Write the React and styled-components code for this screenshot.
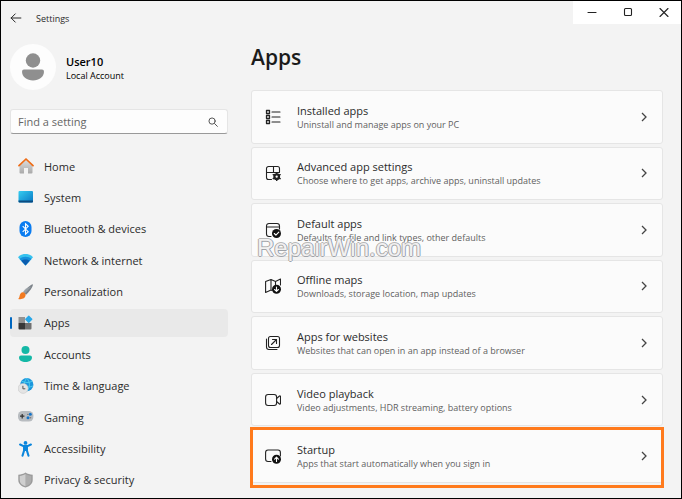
import React from 'react'
import styled, { createGlobalStyle } from 'styled-components'

const GlobalStyle = createGlobalStyle`
    * {
        box-sizing: border-box;
    }
    body {
        margin: 0;
        background: #f3f3f3;
        color: #2b2b2b;
        font-family: "Open Sans", "Noto Sans", sans-serif;
        font-size: 11px;
    }
    button, input {
        font-family: inherit;
        color: inherit;
    }
`
const Window = styled.div`
    min-height: 100vh;
    border: 1px solid black;
    background: #f3f3f3;
    display: flex;
    flex-direction: column;
`
const TitleBar = styled.header`
    display: flex;
    justify-content: space-between;
    align-items: flex-start;
    height: 42px;
`
const TitleLeft = styled.div`
    display: flex;
    align-items: center;
    gap: 14px;
    height: 34px;
    padding-left: 9px;
`
const BackButton = styled.button`
    display: flex;
    padding: 0;
    border: none;
    background: none;
`
const WindowTitle = styled.span`
    font-size: 9px;
`
const Controls = styled.div`
    display: flex;
    background: white;
`
const ControlButton = styled.button`
    display: flex;
    align-items: center;
    justify-content: center;
    width: 36px;
    height: 23px;
    padding: 0 0 2px 2px;
    border: none;
    background: none;
`
const Body = styled.div`
    flex: 1;
    display: flex;
    gap: 23px;
    padding: 0 18px 0 9px;
`
const Sidebar = styled.aside`
    width: 218px;
    flex-shrink: 0;
    display: flex;
    flex-direction: column;
    padding-bottom: 4px;
`
const User = styled.div`
    display: flex;
    align-items: center;
    gap: 10px;
    height: 48px;
`
const UserText = styled.div`
    padding-top: 3px;
    line-height: 14px;
    color: black;
`
const UserName = styled.div`
    font-weight: 600;
`
const UserType = styled.div`
    font-size: 9px;
`
const Search = styled.label`
    display: flex;
    align-items: center;
    height: 25px;
    margin: 18px 0;
    padding: 0 9px 0 7px;
    background: #fdfdfd;
    border: 1px solid #e5e5e5;
    border-bottom-color: #999;
    border-radius: 3px;
`
const SearchInput = styled.input`
    flex: 1;
    min-width: 0;
    padding: 0;
    border: none;
    outline: none;
    background: none;
    font-size: 11px;
    &::placeholder {
        color: #666;
        opacity: 1;
    }
`
const Nav = styled.nav`
    flex: 1;
    display: flex;
    flex-direction: column;
    justify-content: space-between;
`
const NavLink = styled.a`
    display: flex;
    align-items: center;
    gap: 10px;
    height: 28px;
    padding-left: 8px;
    border-radius: 4px;
    position: relative;
    color: #2b2b2b;
    text-decoration: none;
    background: ${props => props.$active ? '#e9e9e9' : 'none'};
    &::before {
        content: "";
        display: ${props => props.$active ? 'block' : 'none'};
        position: absolute;
        left: 0;
        top: 8px;
        width: 2px;
        height: 12px;
        border-radius: 1px;
        background: #0067c0;
    }
`
const Main = styled.main`
    flex: 1;
    min-width: 0;
    display: flex;
    flex-direction: column;
    padding-bottom: 15px;
    position: relative;
`
const PageTitle = styled.h1`
    margin: 0 0 19px;
    font-size: 21px;
    font-weight: 600;
    line-height: 28px;
    color: #1b1b1b;
`
const Cards = styled.div`
    flex: 1;
    display: grid;
    grid-auto-rows: 1fr;
    gap: 3px;
`
const Card = styled.button`
    display: flex;
    align-items: center;
    gap: 16px;
    padding: 0 13px;
    border: 1px solid #e5e5e5;
    border-radius: 3px;
    background: #fbfbfb;
    text-align: left;
    position: relative;
    &::after {
        content: "";
        display: ${props => props.$highlight ? 'block' : 'none'};
        position: absolute;
        inset: -3px -2px -6px;
        border: 3px solid #ff7a1c;
    }
`
const CardText = styled.span`
    flex: 1;
    display: flex;
    flex-direction: column;
    padding-top: 2px;
    line-height: 14px;
`
const CardTitle = styled.span`
    font-size: 11px;
`
const CardNote = styled.span`
    font-size: 9px;
    color: #5f5f5f;
`
const Watermark = styled.span`
    position: absolute;
    left: 6px;
    top: 191px;
    font-family: "Liberation Sans", Arial, sans-serif;
    font-size: 24px;
    line-height: 28px;
    color: #f1f1f1;
    text-shadow: -1px 0 #b5a99d, 1px 0 #93a4bb, 0 1px #a0a3a8, 0 -1px #b8b8b8;
    pointer-events: none;
`

const Icon = ({ size = 16, children }) => (
    <svg width={size} height={size} viewBox="0 0 16 16" fill="none" stroke="#222" strokeWidth="1.100" strokeLinecap="round" strokeLinejoin="round" aria-hidden="true">
        {children}
    </svg>
)

const Art = ({ children }) => (
    <svg width="16" height="16" viewBox="0 0 16 16" aria-hidden="true">{children}</svg>
)

const Avatar = () => (
    <svg width="46" height="46" viewBox="0 0 46 46" aria-hidden="true">
        <circle cx="23" cy="23" r="23" fill="#fdfdfd"/>
        <circle cx="23" cy="16.500" r="7.200" fill="#8f8f8f"/>
        <path d="M14 25.500h18a2 2 0 0 1 2 2c0 5.500-5 9-11 9s-11-3.500-11-9a2 2 0 0 1 2-2z" fill="#8f8f8f"/>
    </svg>
)

const Chevron = () => (
    <svg width="10" height="10" viewBox="0 0 10 10" fill="none" stroke="#444" strokeWidth="1.300" aria-hidden="true">
        <path d="M3 1l4 4-4 4"/>
    </svg>
)

const navItems = [
    { label: 'Home', icon: (
        <Art>
            <defs>
                <linearGradient id="wall" x1="0" y1="0" x2="0" y2="1"><stop stopColor="#dedede"/><stop offset="1" stopColor="#a9a9a9"/></linearGradient>
            </defs>
            <path d="M8 1.500L14.500 7.500V14.500a1 1 0 0 1-1 1H10v-5.500H6V15.500H2.500a1 1 0 0 1-1-1V7.500z" fill="url(#wall)"/>
            <path d="M1 7.700L8 1l7 6.700" fill="none" stroke="#ee6c16" strokeWidth="1.700" strokeLinecap="round" strokeLinejoin="round"/>
        </Art>
    ) },
    { label: 'System', icon: (
        <Art>
            <defs>
                <linearGradient id="screen" x1="0" y1="0" x2="1" y2="1"><stop stopColor="#35cdf0"/><stop offset="1" stopColor="#0878c5"/></linearGradient>
            </defs>
            <rect x="0.500" y="2" width="14.500" height="11.500" rx="1" fill="url(#screen)"/>
            <path d="M0.500 11.500H15v1a1 1 0 0 1-1 1H1.500a1 1 0 0 1-1-1z" fill="#0b4b80"/>
        </Art>
    ) },
    { label: 'Bluetooth & devices', icon: (
        <Art>
            <rect x="1.500" y="0" width="12" height="16" rx="6" fill="#0a7cf0"/>
            <path d="M4.700 5.200l5.500 5.500-2.700 2.500V2.800l2.700 2.500-5.500 5.500" fill="none" stroke="#fff" strokeWidth="1.100"/>
        </Art>
    ) },
    { label: 'Network & internet', icon: (
        <Art>
            <path d="M7.500 13.500L0 5.300C3.500 1 11.500 1 15 5.300z" fill="#37c2ee"/>
            <path d="M7.500 13.500L1.500 6.900C4.500 4.100 10.500 4.100 13.500 6.900z" fill="#1590dc"/>
            <path d="M7.500 13.500L3.300 8.800C5.500 7.100 9.500 7.100 11.700 8.800z" fill="#0b5cae"/>
        </Art>
    ) },
    { label: 'Personalization', icon: (
        <Art>
            <path d="M14.800 0.400c0.900 0.700-3 7.500-6.700 10.300L5.200 8.200C7.900 4.800 14.100-0.300 14.800 0.400z" fill="#7c838a"/>
            <path d="M7.700 4.400C6.500 5.500 4.900 8 4.900 8l2 1.500 6.500-7z" fill="#aab0b5" opacity="0.600"/>
            <path d="M4.900 8.300c1.600 0.200 2.900 1.300 2.700 3-0.300 3.300-4 4.400-7.500 3.600 1.300-0.900 1.200-2 1.600-3.400 0.500-2 1.400-3.300 3.200-3.200z" fill="#f27a20"/>
        </Art>
    ) },
    { label: 'Apps', icon: (
        <Art>
            <path d="M0.500 2H7v6H0.500z" fill="#929292"/>
            <path d="M0.500 8H7v6.500H1.500a1 1 0 0 1-1-1z" fill="#383838"/>
            <path d="M7 8h6.500v5.500a1 1 0 0 1-1 1H7z" fill="#707070"/>
            <rect x="8" y="1.500" width="5.500" height="5.500" rx="0.600" transform="rotate(45 10.750 4.250)" fill="#27a7e8"/>
        </Art>
    ) },
    { label: 'Accounts', icon: (
        <Art>
            <circle cx="7.500" cy="4" r="4" fill="#14b8a6"/>
            <path d="M3 9.500h9a2 2 0 0 1 2 2c0 3-3 4.500-6.500 4.500S1 14.500 1 11.500a2 2 0 0 1 2-2z" fill="#14b8a6"/>
        </Art>
    ) },
    { label: 'Time & language', icon: (
        <Art>
            <circle cx="8.800" cy="6.700" r="6.600" fill="#1c96dc"/>
            <path d="M3.500 3c3 2 8 2 11 0M2.500 8c4 1.500 9 1.500 12.500 0M8.800 0.200c-3.500 4-3.500 9 0 13M8.800 0.200c3.500 4 3.500 9 0 13" stroke="#51d0ef" strokeWidth="0.900" fill="none"/>
            <circle cx="5.100" cy="10.400" r="5" fill="#e4e4e4" stroke="#bcbcbc" strokeWidth="0.400"/>
            <path d="M4.900 7.800v3h2.400" fill="none" stroke="#555" strokeWidth="1"/>
        </Art>
    ) },
    { label: 'Gaming', icon: (
        <Art>
            <rect x="0" y="2" width="15.400" height="10.500" rx="4.500" fill="#b8bcc0"/>
            <path d="M4.200 5v4.400M2 7.200h4.400" stroke="#333" strokeWidth="1.200"/>
            <circle cx="12.300" cy="5.300" r="1.500" fill="#1675c9"/>
            <circle cx="10" cy="8.800" r="1.500" fill="#1675c9"/>
            <circle cx="9.800" cy="5.400" r="0.700" fill="#777"/>
            <circle cx="12.600" cy="8.800" r="0.700" fill="#777"/>
        </Art>
    ) },
    { label: 'Accessibility', icon: (
        <Art>
            <circle cx="7.500" cy="1.900" r="1.900" fill="#0b86dc"/>
            <path d="M2.100 3.500l3.400 1.600h4l3.400-1.600M6.100 5.500v4l-1.600 5.200M8.900 5.500v4l1.600 5.200" fill="none" stroke="#0b86dc" strokeWidth="2.100" strokeLinecap="round" strokeLinejoin="round"/>
            <path d="M5.500 5h4v5h-4z" fill="#0b86dc"/>
        </Art>
    ) },
    { label: 'Privacy & security', icon: (
        <Art>
            <path d="M7.500 0.500c2 1.600 4.500 2 7.200 2.200V8c0 4-3.200 6.300-7.200 7.500C3.500 14.300 0.300 12 0.300 8V2.700c2.700-0.200 5.200-0.600 7.200-2.200z" fill="#9b9b9b"/>
            <path d="M7.500 2c1.800 1.200 3.800 1.600 5.800 1.900V8c0 3.200-2.300 5.100-5.800 6.200z" fill="#adadad"/>
            <path d="M7.500 2C5.700 3.200 3.700 3.600 1.700 3.900V8c0 3.200 2.300 5.100 5.800 6.200z" fill="#cfcfcf"/>
        </Art>
    ) },
]

const cards = [
    { title: 'Installed apps', note: 'Uninstall and manage apps on your PC', icon: (
        <Icon>
            <path d="M1.500 1.500h3v3h-3zM1.500 6.500h3v3h-3zM1.500 11.500h3v3h-3z" strokeWidth="1.300"/>
            <path d="M7 3h8M7 8h8M7 13h8"/>
        </Icon>
    ) },
    { title: 'Advanced app settings', note: 'Choose where to get apps, archive apps, uninstall updates', icon: (
        <Icon>
            <path d="M6.500 14.500H3.500a2 2 0 0 1-2-2V3.500a2 2 0 0 1 2-2h9a2 2 0 0 1 2 2V7M8.500 1.500v6M1.500 7.500h7M8.500 7.500h6"/>
            <circle cx="11.700" cy="11.700" r="2.400" strokeWidth="2"/>
            <path d="M11.700 7.800v7.800M8.300 9.700l6.800 4M15.100 9.700l-6.800 4" strokeWidth="1.500"/>
            <circle cx="11.700" cy="11.700" r="1.100" fill="#fff" stroke="none"/>
        </Icon>
    ) },
    { title: 'Default apps', note: 'Defaults for file and link types, other defaults', icon: (
        <Icon>
            <path d="M6 14.500H4A2.500 2.500 0 0 1 1.500 12V4A2.500 2.500 0 0 1 4 1.500h8A2.500 2.500 0 0 1 14.500 4V7M1.500 5h13"/>
            <circle cx="11.500" cy="11.500" r="4.500" fill="#111" stroke="none"/>
            <path d="M9.300 11.500l1.600 1.600 2.900-3" stroke="#fff"/>
        </Icon>
    ) },
    { title: 'Offline maps', note: 'Downloads, storage location, map updates', icon: (
        <Icon>
            <path d="M6 12L0.600 14.500V3.500L6 1.500l4.500 2L15.500 1v6M6 1.500V12l1 0.500M10.500 3.500V6.500"/>
            <circle cx="11.500" cy="11.300" r="4.500" fill="#111" stroke="none"/>
            <path d="M11.500 9v4.300M9.600 11.500l1.900 1.900 1.900-1.900" stroke="#fff"/>
        </Icon>
    ) },
    { title: 'Apps for websites', note: 'Websites that can open in an app instead of a browser', icon: (
        <Icon>
            <rect x="3.500" y="1.500" width="11" height="11" rx="2"/>
            <path d="M1.500 4v8a2.500 2.500 0 0 0 2.500 2.500h8M6.500 9.500l5-5M7.500 4.500h4v4"/>
        </Icon>
    ) },
    { title: 'Video playback', note: 'Video adjustments, HDR streaming, battery options', icon: (
        <Icon>
            <rect x="0.600" y="2.500" width="11" height="11" rx="2.500"/>
            <path d="M11.500 6.500L14.500 4a0.600 0.600 0 0 1 1 0.500v7a0.600 0.600 0 0 1-1 0.500l-3-2.500"/>
        </Icon>
    ) },
    { title: 'Startup', note: 'Apps that start automatically when you sign in', highlight: true, icon: (
        <Icon>
            <path d="M6 13.500H3A2.500 2.500 0 0 1 0.600 11V4.500A2.500 2.500 0 0 1 3 2h10a2.500 2.500 0 0 1 2.400 2.500V8"/>
            <circle cx="11.500" cy="11.300" r="4.500" fill="#111" stroke="none"/>
            <path d="M11.500 13.500V9.300M9.600 11.100l1.900-1.900 1.900 1.900" stroke="#fff"/>
        </Icon>
    ) },
]

const App = () => {
  return (
    <Window>
        <GlobalStyle/>
        <TitleBar>
            <TitleLeft>
                <BackButton aria-label="Back">
                    <Icon size={12}><path d="M14.500 8H1.500M7 2.500L1.500 8 7 13.500" strokeWidth="1.300"/></Icon>
                </BackButton>
                <WindowTitle>Settings</WindowTitle>
            </TitleLeft>
            <Controls>
                <ControlButton aria-label="Minimize">
                    <Icon><path d="M4 8.500h8"/></Icon>
                </ControlButton>
                <ControlButton aria-label="Maximize">
                    <Icon><rect x="4.500" y="4.500" width="7" height="7" rx="1"/></Icon>
                </ControlButton>
                <ControlButton aria-label="Close">
                    <Icon><path d="M4 4.500l8 8M12 4.500l-8 8"/></Icon>
                </ControlButton>
            </Controls>
        </TitleBar>
        <Body>
            <Sidebar>
                <User>
                    <Avatar/>
                    <UserText>
                        <UserName>User10</UserName>
                        <UserType>Local Account</UserType>
                    </UserText>
                </User>
                <Search>
                    <SearchInput type="text" placeholder="Find a setting" aria-label="Find a setting"/>
                    <Icon size={10}><circle cx="6.500" cy="6.500" r="5" stroke="#555" strokeWidth="1.600"/><path d="M10.500 10.500l4.500 4.500" stroke="#555" strokeWidth="1.600"/></Icon>
                </Search>
                <Nav>
                    {navItems.map(item => (
                        <NavLink key={item.label} href="#" $active={item.label === 'Apps'}>
                            {item.icon}
                            {item.label}
                        </NavLink>
                    ))}
                </Nav>
            </Sidebar>
            <Main>
                <PageTitle>Apps</PageTitle>
                <Cards>
                    {cards.map(card => (
                        <Card key={card.title} $highlight={card.highlight}>
                            {card.icon}
                            <CardText>
                                <CardTitle>{card.title}</CardTitle>
                                <CardNote>{card.note}</CardNote>
                            </CardText>
                            <Chevron/>
                        </Card>
                    ))}
                </Cards>
                <Watermark>RepairWin.com</Watermark>
            </Main>
        </Body>
    </Window>
  )
}

export default App
